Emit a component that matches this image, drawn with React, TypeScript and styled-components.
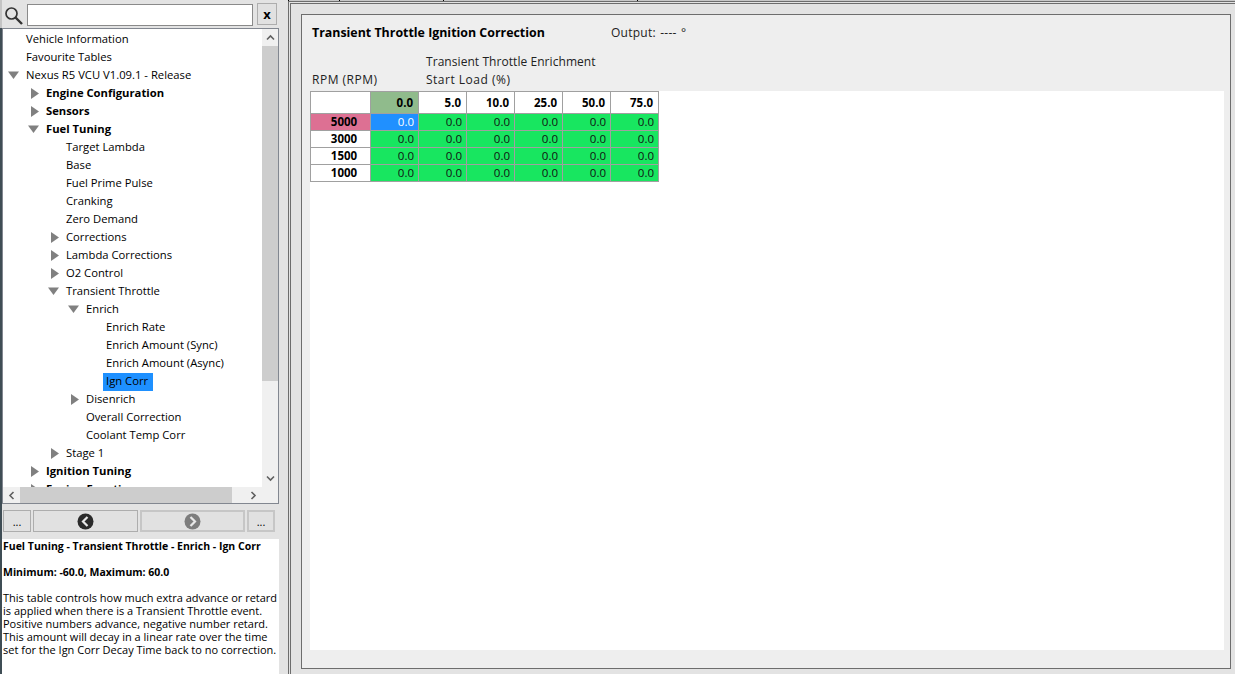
import React from "react";
import styled, { createGlobalStyle } from "styled-components";

const Global = createGlobalStyle`
  html, body { margin: 0; padding: 0; width: 1235px; height: 674px; overflow: hidden; background: #e3e3e3; }
  * { box-sizing: border-box; }
  body { font-family: "Open Sans", "Noto Sans", "Liberation Sans", sans-serif; font-size: 11.25px; color: #000; }
`;

const Page = styled.div`
  width: 1235px; height: 674px; display: flex; background: #e3e3e3;
`;
const EdgeStrip = styled.div`
  width: 2px; height: 674px; background: linear-gradient(#c4c4c4 0, #c4c4c4 28px, #3f4d55 28px, #3f4d55 100%);
  flex: none;
`;
const Sidebar = styled.div`
  width: 278px; flex: none; display: flex; flex-direction: column; height: 674px;
`;
const SearchRow = styled.div`
  height: 28px; display: flex; align-items: flex-start; padding: 4px 0 0 2px; flex: none;
`;
const SearchIconBox = styled.div`
  width: 23px; height: 22px; padding: 3px 0 0 1px; flex: none;
`;
const SearchInput = styled.div`
  width: 226px; height: 22px; background: #fff; border: 1px solid #8a8a8a; flex: none;
`;
const ClearButton = styled.div`
  width: 20px; height: 22px; margin: -1px 0 0 4px; background: #e1e1e1; border: 1px solid #adadad;
  display: flex; align-items: center; justify-content: center; font-weight: 700; font-size: 13px; flex: none;
`;
const TreeBox = styled.div`
  width: 277px; height: 476px; border: 1px solid #828790; background: #fff; flex: none; display: grid;
  grid-template-columns: 1fr 16px; grid-template-rows: 1fr 16px;
`;
const TreeViewport = styled.div`
  overflow: hidden; padding-top: 1px;
`;
const Row = styled.div<{ $level: number }>`
  height: 18px; display: flex; align-items: center; padding-left: ${p => p.$level * 20}px; white-space: nowrap;
`;
const Arrow = styled.span`
  width: 20px; flex: none; height: 18px; display: flex; align-items: center;
`;
const RightIcon = styled.svg`
  margin-left: 8px;
`;
const DownIcon = styled.svg`
  margin-left: 5px;
`;
const Label = styled.span<{ $bold?: boolean; $selected?: boolean }>`
  font-weight: ${p => (p.$bold ? 700 : 400)};
  background: ${p => (p.$selected ? "#1e90ff" : "transparent")};
  padding: 0 ${p => (p.$selected ? 5 : 3)}px 0 3px; line-height: 16px; height: 18px; margin-top: 1px; align-self: flex-start;
`;
const VScroll = styled.div`
  background: #f0f0f0; display: flex; flex-direction: column; align-items: stretch;
`;
const ScrollEnd = styled.div`
  flex: none; height: 17px; display: flex; align-items: center; justify-content: center;
`;
const VThumbTrack = styled.div`
  flex: 1; display: flex; flex-direction: column;
`;
const VThumb = styled.div`
  height: 335px; background: #cdcdcd; flex: none;
`;
const HScroll = styled.div`
  background: #f0f0f0; display: flex; align-items: center; grid-column: 1;
`;
const HEnd = styled.div`
  flex: none; width: 17px; height: 16px; display: flex; align-items: center; justify-content: center;
`;
const HTrack = styled.div`
  flex: 1; height: 16px;
`;
const HThumb = styled.div`
  width: 212px; height: 16px; background: #cdcdcd;
`;
const Corner = styled.div`
  background: #f0f0f0;
`;
const NavRow = styled.div`
  display: flex; height: 22px; margin-top: 6px; gap: 2px; padding-left: 1px; flex: none;
`;
const SmallBtn = styled.div<{ $off?: boolean }>`
  width: 28px; height: 22px; background: #e1e1e1;
  border: ${p => (p.$off ? "2px solid #c6c6c6" : "1px solid #adadad")};
  display: flex; align-items: center; justify-content: center; font-size: 11px; line-height: 1;
`;
const WideBtn = styled.div<{ $off?: boolean }>`
  width: 105px; height: 22px; background: #e1e1e1;
  border: ${p => (p.$off ? "2px solid #c6c6c6" : "1px solid #adadad")};
  display: flex; align-items: center; justify-content: center;
`;
const Description = styled.div`
  margin-top: 7px; width: 277px; flex: 1; background: #fff; font-size: 11px; line-height: 13px; padding: 1px 0 0 1px;
`;
const DescTitle = styled.div<{ $gap: number }>`
  font-weight: 700; font-size: 10.5px; margin-bottom: ${p => p.$gap}px; height: 13px; white-space: nowrap;
`;
const DescPara = styled.div`
  white-space: nowrap;
`;
const Splitter = styled.div`
  width: 8px; flex: none; height: 674px;
`;
const Main = styled.div`
  flex: 1; height: 674px; display: flex; flex-direction: column; min-width: 0;
`;
const TabStrip = styled.div`
  height: 1px; flex: none; display: flex; background: #c8c8c8;
`;
const TabTick = styled.span<{ $w: number }>`
  width: ${p => p.$w}px; border-right: 1px solid #000; flex: none;
`;
const OuterFrame = styled.div`
  flex: 1; min-height: 0; border-top: 1px solid #6d6d6d; border-left: 1px solid #6d6d6d; padding: 1px 0 0 1px; display: flex;
`;
const InnerFrame = styled.div`
  flex: 1; min-width: 0; border-top: 1px solid #6d6d6d; border-left: 1px solid #6d6d6d;
  padding: 10px 4px 5px 10px; display: flex;
`;
const Panel = styled.div`
  flex: 1; border: 1px solid #6d6d6d; background: #eee; padding: 0 6px 18px 8px; display: flex; flex-direction: column; min-width: 0;
`;
const TitleRow = styled.div`
  height: 35px; display: flex; align-items: center; padding: 0 0 0 2px; flex: none;
`;
const Title = styled.div`
  font-weight: 700; font-size: 12.4px; width: 299px; flex: none;
`;
const Output = styled.div`
  font-size: 12px; color: #222; letter-spacing: 0.25px; word-spacing: 1px;
`;
const AxisRow = styled.div`
  height: 41px; display: flex; flex: none; align-items: flex-end; padding-left: 2px; line-height: 18px; color: #222; font-size: 12px;
`;
const RpmAxis = styled.div`
  width: 114px; flex: none; padding-bottom: 2px; letter-spacing: 0.5px;
`;
const LoadAxis = styled.div`
  padding-bottom: 2px;
`;
const AxisLine = styled.div<{ $spacing: number }>`
  letter-spacing: ${p => p.$spacing}px; white-space: nowrap;
`;
const Sheet = styled.div`
  flex: 1; background: #fff; min-height: 0;
`;
const Grid = styled.table`
  border-collapse: collapse; table-layout: fixed; width: 348px; font-size: 11.5px; margin: 0;
`;
const Col0 = styled.col`
  width: 60px;
`;
const ColN = styled.col`
  width: 48px;
`;
const HeadRow = styled.tr`
  height: 22px;
`;
const BodyRow = styled.tr`
  height: 17px;
`;
const HeadCell = styled.td<{ $active?: boolean }>`
  border: 1px solid #a0a0a0; padding: 0 5px 0 0; text-align: right; font-weight: 700; line-height: 14px;
  background: ${p => (p.$active ? "#90bb8c" : "#fff")}; color: #000;
`;
const RowHead = styled.td<{ $active?: boolean }>`
  border: 1px solid #a0a0a0; padding: 0 0 0 7px; text-align: center; font-weight: 700; line-height: 14px;
  background: ${p => (p.$active ? "#dd7093" : "#fff")}; color: #000;
`;
const ValueCell = styled.td<{ $active?: boolean }>`
  border: 1px solid #a0a0a0; padding: 0 4px 0 0; text-align: right; line-height: 14px;
  background: ${p => (p.$active ? "#2090ff" : "#18e660")}; color: ${p => (p.$active ? "#fff" : "#111")};
`;

const Right = () => (
  <RightIcon width="8" height="11" viewBox="0 0 8 11"><path d="M0 0 L8 5.5 L0 11 Z" fill="#808080" /></RightIcon>
);
const Down = () => (
  <DownIcon width="11" height="8" viewBox="0 0 11 8"><path d="M0 0.5 L11 0.5 L5.5 8 Z" fill="#808080" /></DownIcon>
);
const Chevron = ({ d }: { d: string }) => (
  <svg width="9" height="7" viewBox="0 0 9 7"><path d={d} fill="none" stroke="#606060" strokeWidth="1.6" /></svg>
);
const Round = ({ dir, color }: { dir: "l" | "r"; color: string }) => (
  <svg width="17" height="17" viewBox="0 0 17 17">
    <circle cx="8.5" cy="8.5" r="8" fill={color} />
    <path d={dir === "l" ? "M10.5 4 L6 8.5 L10.5 13" : "M6.5 4 L11 8.5 L6.5 13"} fill="none" stroke="#e8e8e8" strokeWidth="2.2" />
  </svg>
);

type T = { l: number; t: string; b?: boolean; a?: "r" | "d"; s?: boolean };
const tree: T[] = [
  { l: 0, t: "Vehicle Information" },
  { l: 0, t: "Favourite Tables" },
  { l: 0, t: "Nexus R5 VCU V1.09.1 - Release", a: "d" },
  { l: 1, t: "Engine Configuration", b: true, a: "r" },
  { l: 1, t: "Sensors", b: true, a: "r" },
  { l: 1, t: "Fuel Tuning", b: true, a: "d" },
  { l: 2, t: "Target Lambda" },
  { l: 2, t: "Base" },
  { l: 2, t: "Fuel Prime Pulse" },
  { l: 2, t: "Cranking" },
  { l: 2, t: "Zero Demand" },
  { l: 2, t: "Corrections", a: "r" },
  { l: 2, t: "Lambda Corrections", a: "r" },
  { l: 2, t: "O2 Control", a: "r" },
  { l: 2, t: "Transient Throttle", a: "d" },
  { l: 3, t: "Enrich", a: "d" },
  { l: 4, t: "Enrich Rate" },
  { l: 4, t: "Enrich Amount (Sync)" },
  { l: 4, t: "Enrich Amount (Async)" },
  { l: 4, t: "Ign Corr", s: true },
  { l: 3, t: "Disenrich", a: "r" },
  { l: 3, t: "Overall Correction" },
  { l: 3, t: "Coolant Temp Corr" },
  { l: 2, t: "Stage 1", a: "r" },
  { l: 1, t: "Ignition Tuning", b: true, a: "r" },
  { l: 1, t: "Engine Functions", b: true, a: "r" },
];

const cols = ["0.0", "5.0", "10.0", "25.0", "50.0", "75.0"];
const rows = ["5000", "3000", "1500", "1000"];

export default function App() {
  return (
    <Page>
      <Global />
      <EdgeStrip />
      <Sidebar>
        <SearchRow>
          <SearchIconBox>
            <svg width="18" height="18" viewBox="0 0 18 18">
              <circle cx="6.5" cy="6.5" r="5.5" fill="none" stroke="#333" strokeWidth="1.7" />
              <path d="M10.5 10.5 L17 17" stroke="#333" strokeWidth="2.4" />
            </svg>
          </SearchIconBox>
          <SearchInput />
          <ClearButton>x</ClearButton>
        </SearchRow>
        <TreeBox>
          <TreeViewport>
            {tree.map(n => (
              <Row key={n.t} $level={n.l}>
                <Arrow>{n.a === "r" ? <Right /> : n.a === "d" ? <Down /> : null}</Arrow>
                <Label $bold={n.b} $selected={n.s}>{n.t}</Label>
              </Row>
            ))}
          </TreeViewport>
          <VScroll>
            <ScrollEnd><Chevron d="M1 5.5 L4.5 2 L8 5.5" /></ScrollEnd>
            <VThumbTrack><VThumb /></VThumbTrack>
            <ScrollEnd><Chevron d="M1 1.5 L4.5 5 L8 1.5" /></ScrollEnd>
          </VScroll>
          <HScroll>
            <HEnd><svg width="7" height="9" viewBox="0 0 7 9"><path d="M5.5 1 L2 4.5 L5.5 8" fill="none" stroke="#606060" strokeWidth="1.6" /></svg></HEnd>
            <HTrack><HThumb /></HTrack>
            <HEnd><svg width="7" height="9" viewBox="0 0 7 9"><path d="M1.5 1 L5 4.5 L1.5 8" fill="none" stroke="#606060" strokeWidth="1.6" /></svg></HEnd>
          </HScroll>
          <Corner />
        </TreeBox>
        <NavRow>
          <SmallBtn>...</SmallBtn>
          <WideBtn><Round dir="l" color="#2b2b2b" /></WideBtn>
          <WideBtn $off><Round dir="r" color="#7d7d7d" /></WideBtn>
          <SmallBtn $off>...</SmallBtn>
        </NavRow>
        <Description>
          <DescTitle $gap={13}>Fuel Tuning - Transient Throttle - Enrich - Ign Corr</DescTitle>
          <DescTitle $gap={12}>Minimum: -60.0, Maximum: 60.0</DescTitle>
          <DescPara>This table controls how much extra advance or retard</DescPara>
          <DescPara>is applied when there is a Transient Throttle event.</DescPara>
          <DescPara>Positive numbers advance, negative number retard.</DescPara>
          <DescPara>This amount will decay in a linear rate over the time</DescPara>
          <DescPara>set for the Ign Corr Decay Time back to no correction.</DescPara>
        </Description>
      </Sidebar>
      <Splitter />
      <Main>
        <TabStrip>
          <TabTick $w={1} /><TabTick $w={51} /><TabTick $w={104} /><TabTick $w={194} />
        </TabStrip>
        <OuterFrame>
          <InnerFrame>
            <Panel>
              <TitleRow>
                <Title>Transient Throttle Ignition Correction</Title>
                <Output>Output: ---- °</Output>
              </TitleRow>
              <AxisRow>
                <RpmAxis>RPM (RPM)</RpmAxis>
                <LoadAxis>
                  <AxisLine $spacing={0.06}>Transient Throttle Enrichment</AxisLine>
                  <AxisLine $spacing={0.5}>Start Load (%)</AxisLine>
                </LoadAxis>
              </AxisRow>
              <Sheet>
                <Grid>
                  <colgroup>
                    <Col0 />
                    {cols.map(c => <ColN key={c} />)}
                  </colgroup>
                  <tbody>
                    <HeadRow>
                      <HeadCell />
                      {cols.map((c, i) => <HeadCell key={c} $active={i === 0}>{c}</HeadCell>)}
                    </HeadRow>
                    {rows.map((r, ri) => (
                      <BodyRow key={r}>
                        <RowHead $active={ri === 0}>{r}</RowHead>
                        {cols.map((c, ci) => <ValueCell key={c} $active={ri === 0 && ci === 0}>0.0</ValueCell>)}
                      </BodyRow>
                    ))}
                  </tbody>
                </Grid>
              </Sheet>
            </Panel>
          </InnerFrame>
        </OuterFrame>
      </Main>
    </Page>
  );
}
